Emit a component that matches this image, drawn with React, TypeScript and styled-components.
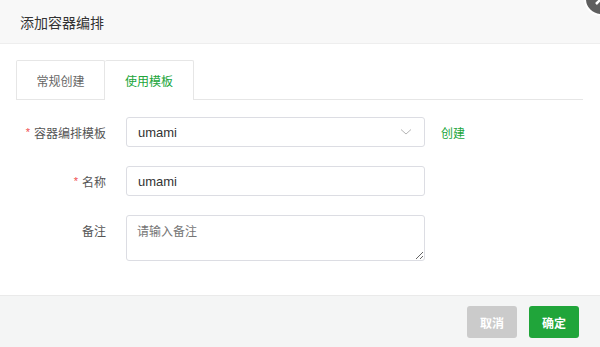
import React from 'react';
import styled, {createGlobalStyle} from 'styled-components';

const GREEN = '#20a53a';

const GlobalStyle = createGlobalStyle`
  html, body {
    margin: 0;
    padding: 0;
    background: #fff;
  }
  body {
    font-family: "Liberation Sans", "Noto Sans CJK SC", sans-serif;
    font-size: 12px;
    color: #333;
  }
`;

const Dialog = styled.div`
  position: relative;
  width: 600px;
  height: 347px;
  display: flex;
  flex-direction: column;
  background: #fff;
  overflow: hidden;
`;

const Header = styled.div`
  height: 43px;
  flex: 0 0 43px;
  display: flex;
  align-items: center;
  padding-left: 20px;
  background: #f8f8f8;
  border-bottom: 1px solid #eee;
  font-size: 14px;
  color: #333;
`;

const CloseButton = styled.div`
  position: absolute;
  top: -18px;
  right: -18px;
  width: 30px;
  height: 30px;
  border-radius: 50%;
  background: #5f5f5f;
  border: 2px solid #fff;
  display: flex;
  align-items: center;
  justify-content: center;
`;

const Body = styled.div`
  flex: 1;
  padding: 16px 17px 0 16px;
`;

const TabBar = styled.div`
  display: flex;
  height: 39px;
  border-bottom: 1px solid #e6e6e6;
`;

const Tab = styled.div<{active?: boolean}>`
  width: 89px;
  display: flex;
  align-items: center;
  justify-content: center;
  box-sizing: border-box;
  border: 1px solid #e6e6e6;
  border-bottom: none;
  border-left-width: ${({active}) => (active ? '0' : '1px')};
  border-radius: 2px 2px 0 0;
  background: #fff;
  margin-bottom: ${({active}) => (active ? '-1px' : '0')};
  height: ${({active}) => (active ? '40px' : '39px')};
  color: ${({active}) => (active ? GREEN : '#666')};
  font-size: 12px;
`;

const Form = styled.div`
  display: flex;
  flex-direction: column;
  gap: 19px;
  padding-top: 17px;
`;

const Row = styled.div`
  display: flex;
  align-items: flex-start;
`;

const Label = styled.div`
  width: 90px;
  height: 30px;
  display: flex;
  align-items: center;
  justify-content: flex-end;
  padding-right: 20px;
  color: #555;
  font-size: 12px;
`;

const Star = styled.span`
  color: #ef4d4d;
  margin-right: 4px;
  font-size: 11px;
`;

const Field = styled.div`
  width: 299px;
  height: 30px;
  box-sizing: border-box;
  border: 1px solid #dcdde3;
  border-radius: 3px;
  display: flex;
  align-items: center;
  justify-content: space-between;
  padding: 0 12px 0 11px;
  font-size: 13px;
  color: #333;
`;

const TextArea = styled.textarea`
  width: 299px;
  height: 46px;
  box-sizing: border-box;
  border: 1px solid #dcdde3;
  border-radius: 3px;
  padding: 6px 10px;
  font-family: "Liberation Sans", "Noto Sans CJK SC", sans-serif;
  font-size: 12px;
  color: #333;
  resize: both;
  outline: none;

  ::placeholder {
    color: #aaa;
  }
`;

const CreateLink = styled.div`
  height: 30px;
  display: flex;
  align-items: center;
  margin-left: 16px;
  color: ${GREEN};
  font-size: 12px;
`;

const Footer = styled.div`
  height: 52px;
  flex: 0 0 52px;
  border-top: 1px solid #eaeaea;
  background: #f4f5f5;
  display: flex;
  align-items: flex-start;
  justify-content: flex-end;
  gap: 12px;
  padding: 10px 21px 0 0;
  box-sizing: border-box;
`;

const Button = styled.div<{primary?: boolean}>`
  width: 50px;
  height: 32px;
  border-radius: 3px;
  display: flex;
  align-items: center;
  justify-content: center;
  color: #fff;
  font-size: 12px;
  font-weight: bold;
  background: ${({primary}) => (primary ? GREEN : '#cbcbcb')};
`;

const Chevron = () => (
  <svg width="12" height="8" viewBox="0 0 12 8" fill="none">
    <path d="M1 1.5 L6 6 L11 1.5" stroke="#b5b5b5" strokeWidth="1" />
  </svg>
);

export default function App() {
  return (
    <>
      <GlobalStyle />
      <Dialog>
        <Header>添加容器编排</Header>
        <CloseButton>
          <svg width="14" height="14" viewBox="0 0 14 14">
            <path d="M2 2 L12 12 M12 2 L2 12" stroke="#fff" strokeWidth="2.5" />
          </svg>
        </CloseButton>
        <Body>
          <TabBar>
            <Tab>常规创建</Tab>
            <Tab active>使用模板</Tab>
          </TabBar>
          <Form>
            <Row>
              <Label><Star>*</Star>容器编排模板</Label>
              <Field>
                <span>umami</span>
                <Chevron />
              </Field>
              <CreateLink>创建</CreateLink>
            </Row>
            <Row>
              <Label><Star>*</Star>名称</Label>
              <Field>umami</Field>
            </Row>
            <Row>
              <Label>备注</Label>
              <TextArea placeholder="请输入备注" />
            </Row>
          </Form>
        </Body>
        <Footer>
          <Button>取消</Button>
          <Button primary>确定</Button>
        </Footer>
      </Dialog>
    </>
  );
}
